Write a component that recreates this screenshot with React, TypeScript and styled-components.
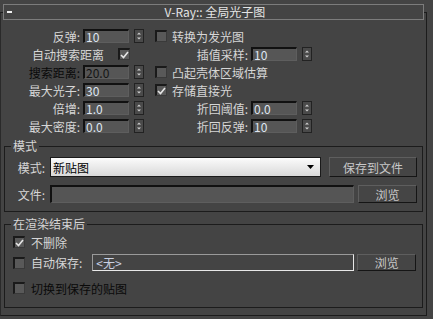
import React from "react";
import styled, { createGlobalStyle } from "styled-components";

const GlobalStyle = createGlobalStyle`
  html, body {
    margin: 0;
    padding: 0;
    background: #444444;
  }
  body {
    font-family: "Noto Sans CJK SC", "Noto Sans", sans-serif;
    font-size: 12px;
    color: #d6d6d6;
  }
`;

const Page = styled.div`
  width: 433px;
  height: 319px;
  overflow: hidden;
  background: #444444;
  padding-top: 12px;
  box-sizing: border-box;
`;

const Rollout = styled.div`
  width: 427px;
  height: 304px;
  box-sizing: border-box;
  border: 1px solid #1c1c1c;
  border-left-color: #2a2a2a;
`;

const TitleBar = styled.div`
  position: relative;
  margin: -9px 2px 0;
  height: 16px;
  box-sizing: border-box;
  border: 1px solid #7c7c7c;
  background: #444444;
  display: grid;
  grid-template-columns: 20px 1fr 20px;
  align-items: center;
  padding-left: 3px;
  line-height: 14px;
  color: #e4e4e4;
`;

const Dash = styled.span`
  width: 5px;
  height: 2px;
  background: #f0f0f0;
`;

const TitleText = styled.span`
  text-align: center;
  white-space: nowrap;
`;

const Params = styled.div`
  padding-top: 7px;
`;

const Row = styled.div`
  display: flex;
  align-items: center;
  height: 18px;
`;

const LeftCell = styled.div`
  width: 154px;
  display: flex;
  align-items: center;
  flex: none;
`;

const RightCell = styled.div`
  display: flex;
  align-items: center;
`;

const Label = styled.span<{ $w: number; $disabled?: boolean }>`
  width: ${(p) => p.$w}px;
  flex: none;
  text-align: right;
  white-space: nowrap;
  margin-right: 3px;
  color: ${(p) => (p.$disabled ? "#0a0a0a" : "#d6d6d6")};
`;

const Text = styled.span<{ $disabled?: boolean; $ml?: number }>`
  white-space: nowrap;
  margin-left: ${(p) => p.$ml ?? 0}px;
  color: ${(p) => (p.$disabled ? "#0a0a0a" : "#d6d6d6")};
`;

const SpinInput = styled.span<{ $disabled?: boolean }>`
  width: 46px;
  height: 14px;
  box-sizing: border-box;
  border-style: solid;
  border-width: 2px 1px 1px 2px;
  border-color: #111111 #5e5e5e #5e5e5e #111111;
  background: #565656;
  padding-left: 1px;
  display: flex;
  align-items: center;
  line-height: 11px;
  color: ${(p) => (p.$disabled ? "#141414" : "#dfe6f2")};
`;

const Arrows = styled.span`
  width: 10px;
  height: 14px;
  margin-left: 5px;
  box-sizing: border-box;
  border: 1px solid #222222;
  background: #4a4a4a;
  display: flex;
  flex: none;
`;

const Box = styled.span<{ $ml?: number }>`
  width: 12px;
  height: 12px;
  flex: none;
  box-sizing: border-box;
  border-style: solid;
  border-width: 2px 1px 1px 2px;
  border-color: #1a1a1a #3a3a3a #3a3a3a #1a1a1a;
  background: #595959;
  margin-left: ${(p) => p.$ml ?? 0}px;
  display: flex;
  align-items: center;
  justify-content: center;
`;

const Group = styled.fieldset<{ $mt: number }>`
  margin: ${(p) => p.$mt}px 3px 0;
  padding: 0;
  min-width: 0;
  border: 1px solid #1c1c1c;
`;

const Legend = styled.legend`
  margin-left: 6px;
  padding: 0 2px;
  line-height: 14px;
  font-size: 12px;
  color: #d6d6d6;
`;

const GroupBody = styled.div<{ $pad: string }>`
  padding: ${(p) => p.$pad};
`;

const FormRow = styled.div<{ $h: number; $mt?: number }>`
  display: flex;
  align-items: center;
  height: ${(p) => p.$h}px;
  margin-top: ${(p) => p.$mt ?? 0}px;
`;

const FieldLabel = styled.span`
  width: 28px;
  margin-right: 5px;
  text-align: right;
  white-space: nowrap;
`;

const Dropdown = styled.div`
  width: 271px;
  height: 20px;
  box-sizing: border-box;
  border: 1px solid #1a1a1a;
  background: linear-gradient(#fbfbfb, #d9d9d9);
  color: #000000;
  display: flex;
  align-items: center;
  justify-content: space-between;
  padding: 0 6px 0 2px;
`;

const Button = styled.div<{ $w: number; $h: number; $ml: number }>`
  width: ${(p) => p.$w}px;
  height: ${(p) => p.$h}px;
  margin-left: ${(p) => p.$ml}px;
  box-sizing: border-box;
  border: 1px solid;
  border-color: #5e5e5e #151515 #151515 #5e5e5e;
  background: #454545;
  color: #c8c8c8;
  display: flex;
  align-items: center;
  justify-content: center;
  white-space: nowrap;
`;

const FileInput = styled.div`
  width: 304px;
  height: 18px;
  box-sizing: border-box;
  border-style: solid;
  border-width: 2px 1px 1px 2px;
  border-color: #111111 #5e5e5e #5e5e5e #111111;
  background: #555555;
`;

const PathInput = styled.div`
  width: 262px;
  height: 17px;
  margin-left: 10px;
  box-sizing: border-box;
  border: 1px solid;
  border-color: #9a9a9a #e8e8e8 #e8e8e8 #9a9a9a;
  background: #444444;
  color: #c9d0e2;
  padding-left: 3px;
  display: flex;
  align-items: center;
`;

const Check = () => (
  <svg width="9" height="8" viewBox="0 0 9 8">
    <path d="M1 4 L3.5 6.5 L8 1" fill="none" stroke="#e6e6e6" strokeWidth="1.6" />
  </svg>
);

const SpinArrows = () => (
  <Arrows>
    <svg width="8" height="12" viewBox="0 0 8 12">
      <path d="M2 4.5 L4 2.5 L6 4.5 Z" fill="#cfcfcf" />
      <path d="M2 7.5 L4 9.5 L6 7.5 Z" fill="#cfcfcf" />
    </svg>
  </Arrows>
);

type SpinProps = { value: string; disabled?: boolean };

const Spinner = ({ value, disabled }: SpinProps) => (
  <>
    <SpinInput $disabled={disabled}>{value}</SpinInput>
    <SpinArrows />
  </>
);

type CheckProps = { label: string; checked?: boolean; disabled?: boolean; gap?: number };

const CheckOption = ({ label, checked, disabled, gap = 5 }: CheckProps) => (
  <RightCell>
    <Box>{checked && <Check />}</Box>
    <Text $ml={gap} $disabled={disabled}>
      {label}
    </Text>
  </RightCell>
);

const LeftSpin = ({ label, value, disabled }: { label: string; value: string; disabled?: boolean }) => (
  <LeftCell>
    <Label $w={79} $disabled={disabled}>
      {label}
    </Label>
    <Spinner value={value} disabled={disabled} />
  </LeftCell>
);

const RightSpin = ({ label, value }: { label: string; value: string }) => (
  <RightCell>
    <Label $w={93}>{label}</Label>
    <Spinner value={value} />
  </RightCell>
);

export default function App() {
  return (
    <Page>
      <GlobalStyle />
      <Rollout>
        <TitleBar>
          <Dash />
          <TitleText>V-Ray:: 全局光子图</TitleText>
          <span />
        </TitleBar>

        <Params>
          <Row>
            <LeftSpin label="反弹:" value="10" />
            <CheckOption label="转换为发光图" />
          </Row>
          <Row>
            <LeftCell>
              <Text $ml={31}>自动搜索距离</Text>
              <Box $ml={14}>
                <Check />
              </Box>
            </LeftCell>
            <RightSpin label="插值采样:" value="10" />
          </Row>
          <Row>
            <LeftSpin label="搜索距离:" value="20.0" disabled />
            <CheckOption label="凸起壳体区域估算" />
          </Row>
          <Row>
            <LeftSpin label="最大光子:" value="30" />
            <CheckOption label="存储直接光" checked />
          </Row>
          <Row>
            <LeftSpin label="倍增:" value="1.0" />
            <RightSpin label="折回阈值:" value="0.0" />
          </Row>
          <Row>
            <LeftSpin label="最大密度:" value="0.0" />
            <RightSpin label="折回反弹:" value="10" />
          </Row>
        </Params>

        <Group $mt={4}>
          <Legend>模式</Legend>
          <GroupBody $pad="4px 4px 8px 12px">
            <FormRow $h={20}>
              <FieldLabel>模式:</FieldLabel>
              <Dropdown>
                <span>新贴图</span>
                <svg width="7" height="4" viewBox="0 0 7 4">
                  <path d="M0 0 L7 0 L3.5 4 Z" fill="#000" />
                </svg>
              </Dropdown>
              <Button $w={88} $h={20} $ml={8}>
                保存到文件
              </Button>
            </FormRow>
            <FormRow $h={18} $mt={8}>
              <FieldLabel>文件:</FieldLabel>
              <FileInput />
              <Button $w={59} $h={18} $ml={4}>
                浏览
              </Button>
            </FormRow>
          </GroupBody>
        </Group>

        <Group $mt={5}>
          <Legend>在渲染结束后</Legend>
          <GroupBody $pad="4px 4px 12px 8px">
            <FormRow $h={14}>
              <CheckOption label="不删除" checked gap={6} />
            </FormRow>
            <FormRow $h={17} $mt={5}>
              <CheckOption label="自动保存:" gap={6} />
              <PathInput>&lt;无&gt;</PathInput>
              <Button $w={59} $h={17} $ml={3}>
                浏览
              </Button>
            </FormRow>
            <FormRow $h={14} $mt={10}>
              <CheckOption label="切换到保存的贴图" disabled gap={6} />
            </FormRow>
          </GroupBody>
        </Group>
      </Rollout>
    </Page>
  );
}
